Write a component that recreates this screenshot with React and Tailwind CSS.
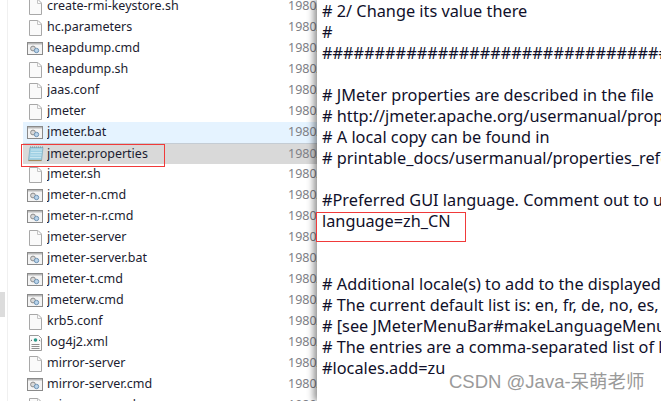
const files = [
  ['create-rmi-keystore.sh', 'doc'],
  ['hc.parameters', 'doc'],
  ['heapdump.cmd', 'cmd'],
  ['heapdump.sh', 'doc'],
  ['jaas.conf', 'doc'],
  ['jmeter', 'doc'],
  ['jmeter.bat', 'cmd', 'hover'],
  ['jmeter.properties', 'notepad', 'selected'],
  ['jmeter.sh', 'doc'],
  ['jmeter-n.cmd', 'cmd'],
  ['jmeter-n-r.cmd', 'cmd'],
  ['jmeter-server', 'doc'],
  ['jmeter-server.bat', 'cmd'],
  ['jmeter-t.cmd', 'cmd'],
  ['jmeterw.cmd', 'cmd'],
  ['krb5.conf', 'doc'],
  ['log4j2.xml', 'xml'],
  ['mirror-server', 'doc'],
  ['mirror-server.cmd', 'cmd'],
  ['mirror-server.sh', 'doc'],
]

const lines = [
  '# 2/ Change its value there',
  '#',
  '#############################################################################',
  '',
  '# JMeter properties are described in the file',
  '# http://jmeter.apache.org/usermanual/properties_reference.html',
  '# A local copy can be found in',
  '# printable_docs/usermanual/properties_reference.html',
  '',
  "#Preferred GUI language. Comment out to use the JVM default locale's language.",
  'language=zh_CN',
  '',
  '',
  '# Additional locale(s) to add to the displayed list.',
  '# The current default list is: en, fr, de, no, es, tr, ja, zh_CN, zh_TW, pl, pt_BR',
  '# [see JMeterMenuBar#makeLanguageMenu()]',
  '# The entries are a comma-separated list of languages',
  '#locales.add=zu',
]

function FileIcon({ type }) {
  if (type === 'cmd') {
    return (
      <svg width="16" height="13" viewBox="0 0 16 13" className="shrink-0">
        <rect x="0.5" y="0.5" width="15" height="12" fill="#f4f4f4" stroke="#8a8a8a" />
        <rect x="1" y="1" width="14" height="1.5" fill="#b9b9b9" />
        <circle cx="6" cy="6.5" r="2.4" fill="#d8d8d8" stroke="#8d8d8d" />
        <circle cx="9.5" cy="8.5" r="2.2" fill="#b9d3ea" stroke="#6f93b3" />
      </svg>
    )
  }
  if (type === 'notepad') {
    return (
      <svg width="17" height="16" viewBox="0 0 17 16" className="shrink-0">
        <path d="M3 1.5h13l-1.5 13H1.5z" fill="#9fd0e4" stroke="#8fb6c6" />
        <path d="M4 4h11M3.7 6.5h11M3.4 9h11M3 11.5h11" stroke="#c8e6f0" />
        <path d="M1.5 14.5h13" stroke="#a08a5c" strokeWidth="1.2" />
        <path d="M3 1h13" stroke="#7d8b95" strokeDasharray="1 1" />
      </svg>
    )
  }
  if (type === 'xml') {
    return (
      <svg width="15" height="16" viewBox="0 0 15 16" className="shrink-0">
        <path d="M1.5 0.5h9l3 3v12h-12z" fill="#fbfbfb" stroke="#9a9a9a" />
        <circle cx="7.5" cy="5" r="1.8" fill="#2b9a8a" />
        <path d="M4 5l-1.2 0.8M11 5l1.2 0.8" stroke="#555" />
        <path d="M3.5 9.5h8M3.5 11.5h8M3.5 13.5h8" stroke="#8f8f8f" />
      </svg>
    )
  }
  return (
    <svg width="13" height="16" viewBox="0 0 13 16" className="shrink-0">
      <path d="M0.5 0.5h8.5l3.5 3.5v11.5h-12z" fill="#fafafa" stroke="#a8a8a8" />
      <path d="M8.5 0.5v4h4" fill="none" stroke="#c4c4c4" />
    </svg>
  )
}

function FileRow({ name, type, state }) {
  const bg = state === 'hover' ? 'bg-[#e5f3ff]' : state === 'selected' ? 'bg-[#d9d9d9] border-t border-[#c4ccd4]' : ''
  return (
    <div className={`flex h-[21px] shrink-0 items-center ${bg}`}>
      <span className="flex w-[24px] shrink-0 justify-center">
        <FileIcon type={type} />
      </span>
      <span className="w-[241px] shrink-0 truncate text-[#1c1c30]">{name}</span>
      <span className="text-[#808086]">1980/01/01</span>
    </div>
  )
}

export default function App() {
  return (
    <div className="relative flex h-[401px] w-[661px] overflow-hidden bg-white font-['Noto_Sans',sans-serif]">
      <div className="flex w-[8px] shrink-0 flex-col justify-end border-r border-[#f0f0f0] pb-[84px]">
        <div className="h-[25px] w-[5px] bg-[#dcdcdc]" />
      </div>

      <div className="w-[309px] shrink-0 overflow-hidden whitespace-nowrap pl-[15px] text-[12.5px]">
        <div className="-mt-[4px] flex flex-col">
          {files.map(([name, type, state]) => (
            <FileRow key={name} name={name} type={type} state={state} />
          ))}
        </div>
      </div>

      <div className="relative min-w-0 flex-1 overflow-hidden whitespace-pre bg-white pl-[5px] pt-[1px] text-[16.3px] leading-[21px] text-[#10102a] shadow-[-3px_0_7px_rgba(0,0,0,0.45)]">
        {lines.map((line, i) => (
          <div key={i} className="h-[21px]">{line}</div>
        ))}
      </div>

      {/* red annotation boxes drawn over the screenshot */}
      <div className="absolute left-[21px] top-[144px] h-[23px] w-[144px] border border-[#f03a3a]" />
      <div className="absolute left-[316px] top-[212px] h-[30px] w-[150px] border border-[#f03a3a]" />

      <div className="absolute left-[449px] top-[370px] text-[18.5px] leading-[24px] text-[#9a9a9a] [text-shadow:0_0_2px_#fff,1px_1px_1px_#fff] font-['Liberation_Sans','Noto_Sans_CJK_SC',sans-serif]">
        CSDN @Java-呆萌老师
      </div>
    </div>
  )
}
